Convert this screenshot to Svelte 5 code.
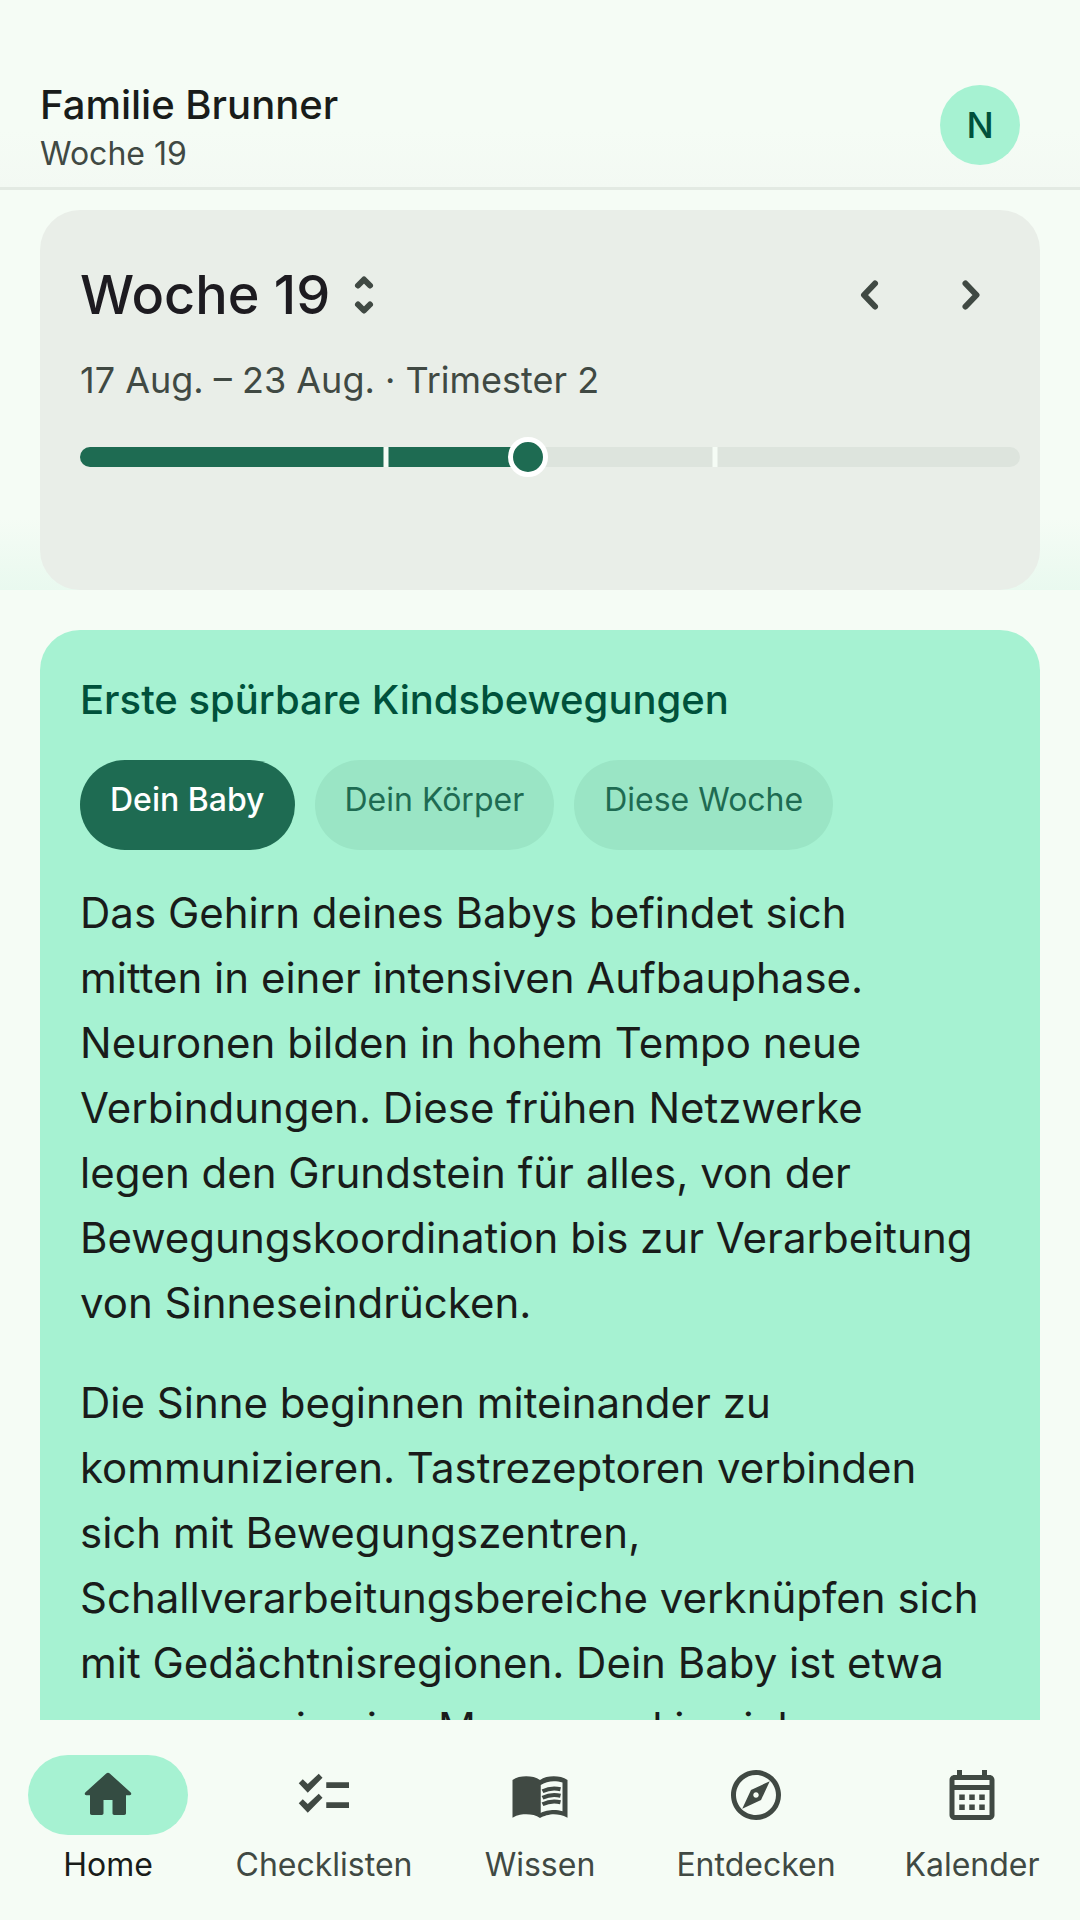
<script lang="ts">
    interface Tab {
        id: string;
        label: string;
        path: string;
        lines?: string; // extra stroked details on top of the filled shape
    }

    interface Topic {
        id: string;
        label: string;
    }

    const TOTAL_WEEKS = 40;
    const TRIMESTER_ENDS = [13, 27];

    const topics: Topic[] = [
        {id: "baby", label: "Dein Baby"},
        {id: "body", label: "Dein Körper"},
        {id: "week", label: "Diese Woche"},
    ];

    const paragraphs = [
        `Das Gehirn deines Babys befindet sich
mitten in einer intensiven Aufbauphase.
Neuronen bilden in hohem Tempo neue
Verbindungen. Diese frühen Netzwerke
legen den Grundstein für alles, von der
Bewegungskoordination bis zur Verarbeitung
von Sinneseindrücken.`,
        `Die Sinne beginnen miteinander zu
kommunizieren. Tastrezeptoren verbinden
sich mit Bewegungszentren,
Schallverarbeitungsbereiche verknüpfen sich
mit Gedächtnisregionen. Dein Baby ist etwa
so gross wie eine Mango und in sich`,
    ];

    const tabs: Tab[] = [
        {
            id: "home",
            label: "Home",
            path: "M11.3 3.4c.4-.4 1-.4 1.4 0l8.4 7.6c.4.5.2 1.1-.4 1.1h-1.500v7.200c0 .4-.3.7-.7.7h-4c-.4 0-.7-.3-.7-.7V14h-3.600v5.300c0 .4-.3.7-.7.7h-4c-.4 0-.7-.3-.7-.7v-7.200H3.300c-.6 0-.8-.6-.4-1.100z",
        },
        {
            id: "checklists",
            label: "Checklisten",
            path: "M22 6.900h-9.100v2.300H22zm0 8h-9.100v2.300H22zM1.900 7.300l1.600-1.600 2 1.900 4.400-4.100 1.500 1.600-5.900 6zm0 8l1.600-1.600 2 1.900 4.400-4.100 1.500 1.600-5.900 6z",
        },
        {
            id: "knowledge",
            label: "Wissen",
            path: "M17.500 4.500c-1.950 0-4.050.4-5.500 1.500-1.450-1.100-3.550-1.500-5.500-1.500S2.450 4.900 1 6v15.100C3.100 19.800 5.050 19.700 6.500 19.700c1.950 0 4.050.4 5.500 1.500 1.350-.850 3.800-1.500 5.500-1.500 1.650 0 3.600.3 5.500 1.400V6c-1.490-1.120-3.630-1.500-5.500-1.500zm3.500 14c-1.100-.350-2.300-.5-3.500-.5-1.700 0-4 .450-5.200 1.200V8c1.350-.850 3.500-1.500 5.200-1.500 1.200 0 2.400.150 3.500.5v11.500z",
            lines: "M13 10.500q3.500-1.700 7.200-.8M13 13.100q3.500-1.700 7.200-.8M13 15.700q3.500-1.700 7.200-.8",
        },
        {
            id: "explore",
            label: "Entdecken",
            path: "M12 2C6.480 2 2 6.480 2 12s4.480 10 10 10 10-4.480 10-10S17.520 2 12 2zm0 18c-4.410 0-8-3.590-8-8s3.590-8 8-8 8 3.590 8 8-3.590 8-8 8zm-5.500-2.500l7.510-3.490L17.500 6.500 9.990 9.990 6.500 17.500zm5.500-6.600c.610 0 1.100.490 1.100 1.100s-.490 1.100-1.100 1.100-1.100-.490-1.100-1.100.490-1.100 1.100-1.100z",
        },
        {
            id: "calendar",
            label: "Kalender",
            path: "M19 4h-1V2h-2v2H8V2H6v2H5c-1.110 0-1.990.9-1.990 2L3 20c0 1.100.890 2 2 2h14c1.100 0 2-.9 2-2V6c0-1.100-.9-2-2-2zm0 16H5V10h14v10zm0-12H5V6h14v2zM6.900 11.800h2.200V14H6.900zm4 0h2.200V14h-2.200zm4 0h2.200V14h-2.200zm-8 4h2.200V18H6.900zm4 0h2.200V18h-2.200zm4 0h2.200V18h-2.200z",
        },
    ];

    let week = $state(19);
    let topic = $state("baby");
    let tab = $state("home");

    const progress = $derived((week / TOTAL_WEEKS) * 100);

    function step(by: number) {
        week = Math.min(TOTAL_WEEKS, Math.max(1, week + by));
    }
</script>

<div class="screen">
    <header>
        <div>
            <h1>Familie Brunner</h1>
            <p>Woche {week}</p>
        </div>
        <button class="avatar" aria-label="Profil">N</button>
    </header>

    <main>
        <div class="week-area">
            <section class="week-card">
                <div class="week-row">
                    <button class="week-title">
                        <h2>Woche {week}</h2>
                        <svg class="sort" viewBox="0 0 40 60" aria-hidden="true">
                            <path d="M14 20.500L20 14.500l6 6M14 39.500l6 6 6-6" />
                        </svg>
                    </button>
                    <div class="steps">
                        <button aria-label="Vorherige Woche" onclick={() => step(-1)}>
                            <svg viewBox="0 0 60 60"><path d="M35 18.500L24 30l11 11.500" /></svg>
                        </button>
                        <button aria-label="Nächste Woche" onclick={() => step(1)}>
                            <svg viewBox="0 0 60 60"><path d="M25.500 18.500L36.500 30l-11 11.500" /></svg>
                        </button>
                    </div>
                </div>
                <p class="dates">17 Aug. – 23 Aug. · Trimester 2</p>
                <div class="slider">
                    <div class="track">
                        <div class="fill" style="width: {progress}%"></div>
                        {#each TRIMESTER_ENDS as end (end)}
                            <span class="mark" style="left: {(end / TOTAL_WEEKS) * 100}%"></span>
                        {/each}
                    </div>
                    <input type="range" min="0" max={TOTAL_WEEKS} bind:value={week} aria-label="Woche" />
                </div>
            </section>
        </div>

        <section class="story">
            <h3>Erste spürbare Kindsbewegungen</h3>
            <div class="chips">
                {#each topics as item (item.id)}
                    <button class="chip" class:active={item.id === topic} onclick={() => (topic = item.id)}>
                        {item.label}
                    </button>
                {/each}
            </div>
            {#each paragraphs as text (text)}
                <p>{text}</p>
            {/each}
        </section>
    </main>

    <nav>
        {#each tabs as item (item.id)}
            <button class="tab" class:active={item.id === tab} onclick={() => (tab = item.id)}>
                <span class="pill">
                    <svg viewBox="0 0 24 24" aria-hidden="true">
                        <path fill-rule="evenodd" d={item.path} />
                        {#if item.lines}
                            <path class="lines" d={item.lines} />
                        {/if}
                    </svg>
                </span>
                <span>{item.label}</span>
            </button>
        {/each}
    </nav>
</div>

<style>
:global(body) {
    margin: 0;
    background: #f5fcf5;
}

.screen {
    --surface: #f5fcf5;
    --primary: #1e6b52;
    --container: #a6f2d2;
    --on-container: #00513b;
    --text: #191c1a;
    --text-muted: #404943;

    display: flex;
    flex-direction: column;
    height: 100vh;
    background: var(--surface);
    color: var(--text);
    font-family: Inter, sans-serif;
}

h1, h2, h3, p {
    margin: 0;
}

h1, h2, h3 {
    font-weight: 550;
}

button {
    padding: 0;
    border: 0;
    background: none;
    color: inherit;
    font: inherit;
    cursor: pointer;
}

header {
    display: flex;
    align-items: center;
    justify-content: space-between;
    padding: 76px 60px 13px 40px;
    border-bottom: 3px solid #e3eae3;
    background: linear-gradient(var(--surface) 70%, #f3f9f3);
}

h1 {
    font-size: 40px;
    line-height: 58px;
}

header p {
    color: var(--text-muted);
    font-size: 32px;
    line-height: 40px;
}

.avatar {
    width: 80px;
    height: 80px;
    border-radius: 50%;
    background: var(--container);
    color: var(--on-container);
    font-size: 36px;
    font-weight: 500;
}

main {
    flex: 1;
    min-height: 0;
    overflow: hidden;
}

.week-area {
    padding: 20px 40px 0;
    background: linear-gradient(var(--surface) 82%, #e9f9ef);
}

.week-card {
    padding: 40px 20px 113px 40px;
    border-radius: 40px;
    background: #e9eee8;
}

.week-row {
    display: flex;
    align-items: center;
    justify-content: space-between;
    height: 90px;
}

.week-title {
    display: flex;
    align-items: center;
    gap: 14px;
}

h2 {
    color: #1d1b20;
    font-size: 54px;
    line-height: 70px;
}

.sort {
    width: 40px;
    height: 60px;
}

.steps {
    display: flex;
}

.steps button {
    display: grid;
    place-items: center;
    width: 100px;
    height: 90px;
}

.steps svg {
    width: 60px;
    height: 60px;
}

.sort path, .steps path {
    fill: none;
    stroke: var(--text-muted);
    stroke-width: 6;
    stroke-linecap: round;
    stroke-linejoin: round;
}

.dates {
    margin-top: 15px;
    color: var(--text-muted);
    font-size: 36px;
    line-height: 50px;
}

.slider {
    display: grid;
    align-items: center;
    margin-top: 32px;
}

.slider > * {
    grid-area: 1 / 1;
}

.track {
    position: relative;
    height: 20px;
    overflow: hidden;
    border-radius: 10px;
    background: #dde4dd;
}

.fill {
    height: 100%;
    background: var(--primary);
}

.mark {
    position: absolute;
    top: 0;
    width: 5px;
    height: 100%;
    background: var(--surface);
    transform: translateX(-50%);
}

input[type="range"] {
    position: relative;
    width: 100%;
    height: 40px;
    margin: 0;
    appearance: none;
    background: none;
}

input[type="range"]::-webkit-slider-thumb {
    box-sizing: border-box;
    width: 40px;
    height: 40px;
    appearance: none;
    border: 5px solid #fff;
    border-radius: 50%;
    background: var(--primary);
}

.story {
    margin: 40px 40px 0;
    padding: 40px;
    border-radius: 40px;
    background: var(--container);
}

h3 {
    color: var(--on-container);
    font-size: 40px;
    line-height: 60px;
}

.chips {
    display: flex;
    gap: 20px;
    margin: 30px 0;
}

.chip {
    padding: 20px 30px 30px;
    border-radius: 45px;
    background: #9ae5c5;
    color: var(--primary);
    font-size: 32px;
    line-height: 40px;
}

.chip.active {
    background: var(--primary);
    color: #fff;
    font-weight: 500;
}

.story p {
    font-size: 42px;
    line-height: 65px;
    white-space: pre-line;
}

.story p + p {
    margin-top: 35px;
}

nav {
    display: grid;
    grid-template-columns: repeat(5, 1fr);
    padding: 35px 0;
    background: var(--surface);
}

.tab {
    display: flex;
    flex-direction: column;
    align-items: center;
    gap: 10px;
    color: var(--text-muted);
    font-size: 32px;
    line-height: 40px;
}

.tab.active {
    color: var(--text);
}

.pill {
    display: grid;
    place-items: center;
    width: 160px;
    height: 80px;
    border-radius: 40px;
}

.active .pill {
    background: var(--container);
}

.pill svg {
    width: 60px;
    height: 60px;
    fill: var(--text-muted);
}

.active .pill svg {
    fill: #344c42;
}

.pill .lines {
    fill: none;
    stroke: var(--text-muted);
    stroke-width: 1.6;
}
</style>
